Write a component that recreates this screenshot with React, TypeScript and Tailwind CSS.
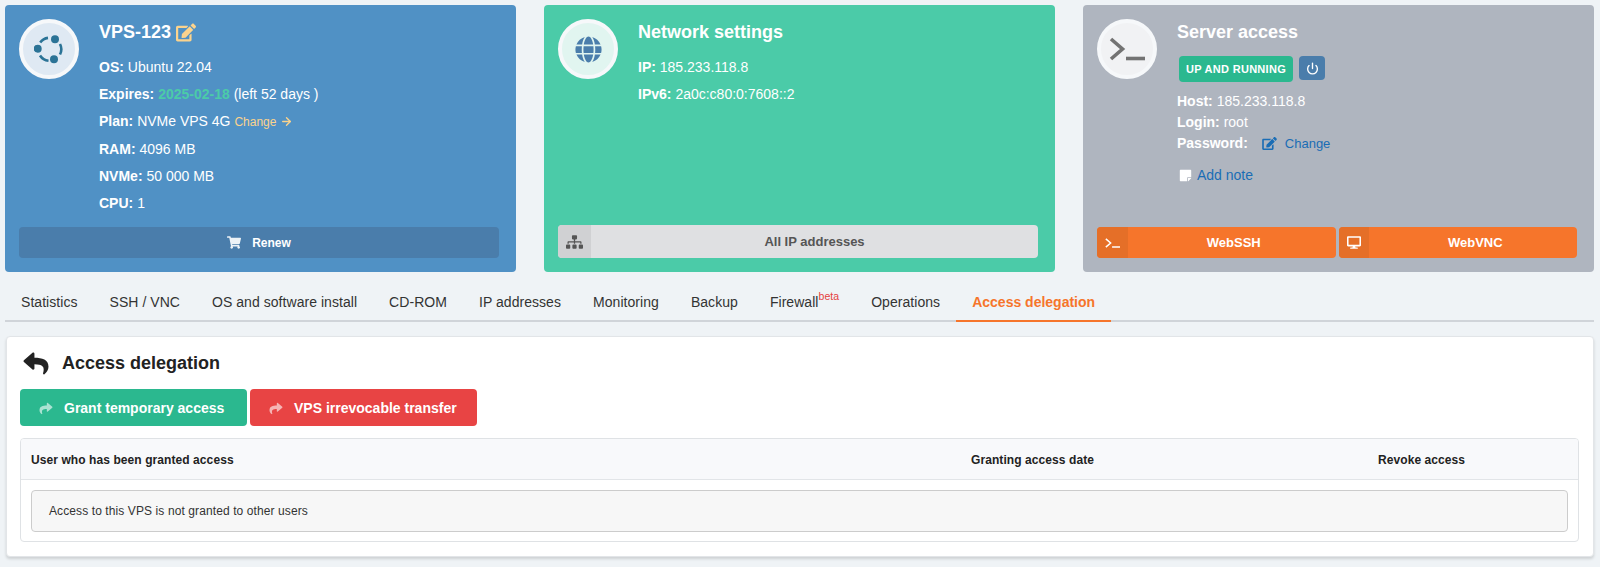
import { ArrowRight, Power } from "lucide-react";
import {
  FaDesktop,
  FaEdit,
  FaGlobe,
  FaReply,
  FaShare,
  FaShoppingCart,
  FaSitemap,
  FaStickyNote,
} from "react-icons/fa";

const tabs = [
  "Statistics",
  "SSH / VNC",
  "OS and software install",
  "CD-ROM",
  "IP addresses",
  "Monitoring",
  "Backup",
  "Firewall",
  "Operations",
];

function UbuntuIcon() {
  return (
    <svg viewBox="0 0 30 30" className="w-[30px] h-[30px]" fill="none" stroke="#2b7396" strokeWidth="2.6">
      <path d="M6.2 8.5A11.5 11.5 0 0 1 14 3.9" />
      <path d="M26 10A11.5 11.5 0 0 1 26 20.5" />
      <path d="M6 21.5A11.5 11.5 0 0 0 14.5 26.8" />
      <circle cx="21" cy="5.3" r="4" fill="#2b7396" stroke="none" />
      <circle cx="3.7" cy="14.7" r="4" fill="#2b7396" stroke="none" />
      <circle cx="20" cy="25.3" r="4" fill="#2b7396" stroke="none" />
    </svg>
  );
}

function TerminalIcon({ className }: { className: string }) {
  return (
    <svg viewBox="0 0 36 24" className={className} fill="none" stroke="currentColor" strokeWidth="3.6">
      <path d="M2 2l11.5 10L2 22" />
      <path d="M17 21.5h19" />
    </svg>
  );
}

function Avatar({ className, children }: { className: string; children: React.ReactNode }) {
  return (
    <div className={`w-[60px] h-[60px] shrink-0 rounded-full border-4 border-[#f6f8fa] flex items-center justify-center ${className}`}>
      {children}
    </div>
  );
}

function InfoLine({ label, tight, children }: { label: string; tight?: boolean; children: React.ReactNode }) {
  return (
    <div className={`h-[27.3px] text-white whitespace-nowrap ${tight ? "leading-[24.5px]" : "leading-[27.3px]"}`}>
      <b>{label}:</b> {children}
    </div>
  );
}

export default function App() {
  return (
    <div className="min-h-[567px] bg-[#eff3f6] pt-[5px] pl-[5px] pr-[6px] text-[14px] font-['Liberation_Sans',Arial,sans-serif] overflow-hidden">
      <div className="grid grid-cols-3 gap-[28px]">
        <div className="h-[267px] rounded bg-[#5091c5] pt-[14px] pb-[14px] pl-[14px] pr-[17px] flex flex-col">
          <div className="flex">
            <Avatar className="bg-[#dfe9f3]">
              <UbuntuIcon />
            </Avatar>
            <div className="ml-[20px]">
              <div className="h-[26px] leading-[26px] mb-[9px] text-[18px] font-bold text-white flex items-center gap-[5px]">
                VPS-123 <FaEdit className="text-[#fbd38d] w-[20px] h-[19px]" />
              </div>
              <InfoLine label="OS">Ubuntu 22.04</InfoLine>
              <InfoLine label="Expires">
                <b className="text-[#4bcba8]">2025-02-18</b> (left 52 days )
              </InfoLine>
              <InfoLine label="Plan" tight>
                NVMe VPS 4G{" "}
                <span className="text-[12px] text-[#fbd38d]">
                  Change <ArrowRight className="inline w-[13px] h-[13px] -mt-[2px]" strokeWidth={2.5} />
                </span>
              </InfoLine>
              <InfoLine label="RAM">4096 MB</InfoLine>
              <InfoLine label="NVMe">50 000 MB</InfoLine>
              <InfoLine label="CPU">1</InfoLine>
            </div>
          </div>
          <button className="mt-auto h-[31px] rounded bg-[#4a7dab] text-white text-[12px] font-bold flex items-center justify-center gap-[11px]">
            <FaShoppingCart className="w-[14px] h-[13px] opacity-90" />
            Renew
          </button>
        </div>

        <div className="h-[267px] rounded bg-[#4bcba8] pt-[14px] pb-[14px] pl-[14px] pr-[17px] flex flex-col">
          <div className="flex">
            <Avatar className="bg-[#e1f5f0]">
              <FaGlobe className="w-[27px] h-[27px] text-[#4a7dab]" />
            </Avatar>
            <div className="ml-[20px]">
              <div className="h-[26px] leading-[26px] mb-[9px] text-[18px] font-bold text-white">Network settings</div>
              <InfoLine label="IP">185.233.118.8</InfoLine>
              <InfoLine label="IPv6">2a0c:c80:0:7608::2</InfoLine>
            </div>
          </div>
          <button className="mt-auto h-[33px] rounded bg-[#dfe0e2] text-[#555] text-[13px] font-bold flex items-center overflow-hidden">
            <span className="w-[33px] h-full bg-[#d0d1d3] flex items-center justify-center">
              <FaSitemap className="w-[17px] h-[14px] text-[#555]" />
            </span>
            <span className="flex-1 text-center">All IP addresses</span>
          </button>
        </div>

        <div className="h-[267px] rounded bg-[#afb5bf] pt-[14px] pb-[14px] pl-[14px] pr-[17px] flex flex-col">
          <div className="flex">
            <Avatar className="bg-[#f1f2f4]">
              <TerminalIcon className="w-[36px] h-[24px] text-[#737373]" />
            </Avatar>
            <div className="ml-[20px] text-white">
              <div className="h-[26px] leading-[26px] text-[18px] font-bold">Server access</div>
              <div className="flex items-start gap-[6px] mt-[11px] ml-[2px]">
                <span className="h-[26px] w-[114px] rounded bg-[#2bb88f] text-[11px] font-bold tracking-[0.3px] flex items-center justify-center">
                  UP AND RUNNING
                </span>
                <button className="w-[26px] h-[24px] rounded bg-[#4a7dab] flex items-center justify-center">
                  <Power className="w-[13px] h-[13px]" strokeWidth={2.5} />
                </button>
              </div>
              <div className="mt-[9px] leading-[21px]">
                <div>
                  <b>Host:</b> 185.233.118.8
                </div>
                <div>
                  <b>Login:</b> root
                </div>
                <div className="flex items-center">
                  <b>Password:</b>
                  <FaEdit className="ml-[14px] w-[15px] h-[13px] text-[#1a6db5]" />
                  <span className="ml-[8px] text-[13px] text-[#1a6db5]">Change</span>
                </div>
              </div>
              <div className="mt-[11px] ml-[2px] flex items-center gap-[5px] leading-[21px]">
                <FaStickyNote className="w-[13px] h-[13px] text-white" />
                <span className="text-[#1a6db5]">Add note</span>
              </div>
            </div>
          </div>
          <div className="mt-auto flex gap-[3px]">
            <button className="flex-1 h-[31px] rounded bg-[#f6752b] text-white text-[13px] font-bold flex items-center overflow-hidden">
              <span className="w-[31px] h-full bg-[#e56f28] flex items-center justify-center">
                <TerminalIcon className="w-[15px] h-[10px]" />
              </span>
              <span className="flex-1 text-center pl-[4px]">WebSSH</span>
            </button>
            <button className="flex-1 h-[31px] rounded bg-[#f6752b] text-white text-[13px] font-bold flex items-center overflow-hidden">
              <span className="w-[30px] h-full bg-[#e56f28] flex items-center justify-center">
                <FaDesktop className="w-[14px] h-[13px]" />
              </span>
              <span className="flex-1 text-center pl-[5px]">WebVNC</span>
            </button>
          </div>
        </div>
      </div>

      <div className="mt-[12px] flex h-[38px] border-b-2 border-[#d0d4d9] text-[#333]">
        {tabs.map((tab) => (
          <div key={tab} className="px-4 h-[38px] leading-[36px] tracking-[0.05px] whitespace-nowrap">
            {tab}
            {tab === "Firewall" && (
              <sup className="text-[10.5px] text-[#e53e3e] relative top-[-2px] align-[5px] leading-none">beta</sup>
            )}
          </div>
        ))}
        <div className="px-4 h-[38px] leading-[36px] font-bold text-[#f6752b] border-b-2 border-[#f6752b] whitespace-nowrap">
          Access delegation
        </div>
      </div>

      <div className="mt-[14px] ml-[1px] h-[221px] rounded bg-white border border-[#e2e5e8] shadow-[0_2px_3px_rgba(0,0,0,0.14)] pt-[10px] pl-[13px] pr-[14px]">
        <div className="flex items-center h-[32px] text-[#222]">
          <FaReply className="w-[28px] h-[25px] ml-[2px]" />
          <span className="ml-[12px] text-[18px] font-bold">Access delegation</span>
        </div>
        <div className="mt-[10px] flex gap-[3px]">
          <button className="w-[227px] h-[37px] pt-[1px] rounded bg-[#2bb88f] text-white font-bold flex items-center pl-[19px] gap-[11px]">
            <FaShare className="w-[14px] h-[13px] opacity-60" />
            Grant temporary access
          </button>
          <button className="w-[227px] h-[37px] pt-[1px] rounded bg-[#e84444] text-white font-bold flex items-center pl-[19px] gap-[11px]">
            <FaShare className="w-[14px] h-[13px] opacity-60" />
            VPS irrevocable transfer
          </button>
        </div>
        <div className="mt-[12px] h-[104px] rounded border border-[#dfe2e5] overflow-hidden">
          <div className="h-[41px] pt-[1px] flex items-center bg-[#f8f9fb] border-b border-[#e2e5e8] text-[12px] font-bold text-[#222] tracking-[0.08px]">
            <span className="pl-[10px] w-[950px]">User who has been granted access</span>
            <span className="w-[407px]">Granting access date</span>
            <span>Revoke access</span>
          </div>
          <div className="mx-[10px] mt-[10px] h-[42px] rounded border border-[#ccc] bg-[#f7f7f7] flex items-center pl-[17px] text-[12px] tracking-[0.1px] text-[#333]">
            Access to this VPS is not granted to other users
          </div>
        </div>
      </div>
    </div>
  );
}
